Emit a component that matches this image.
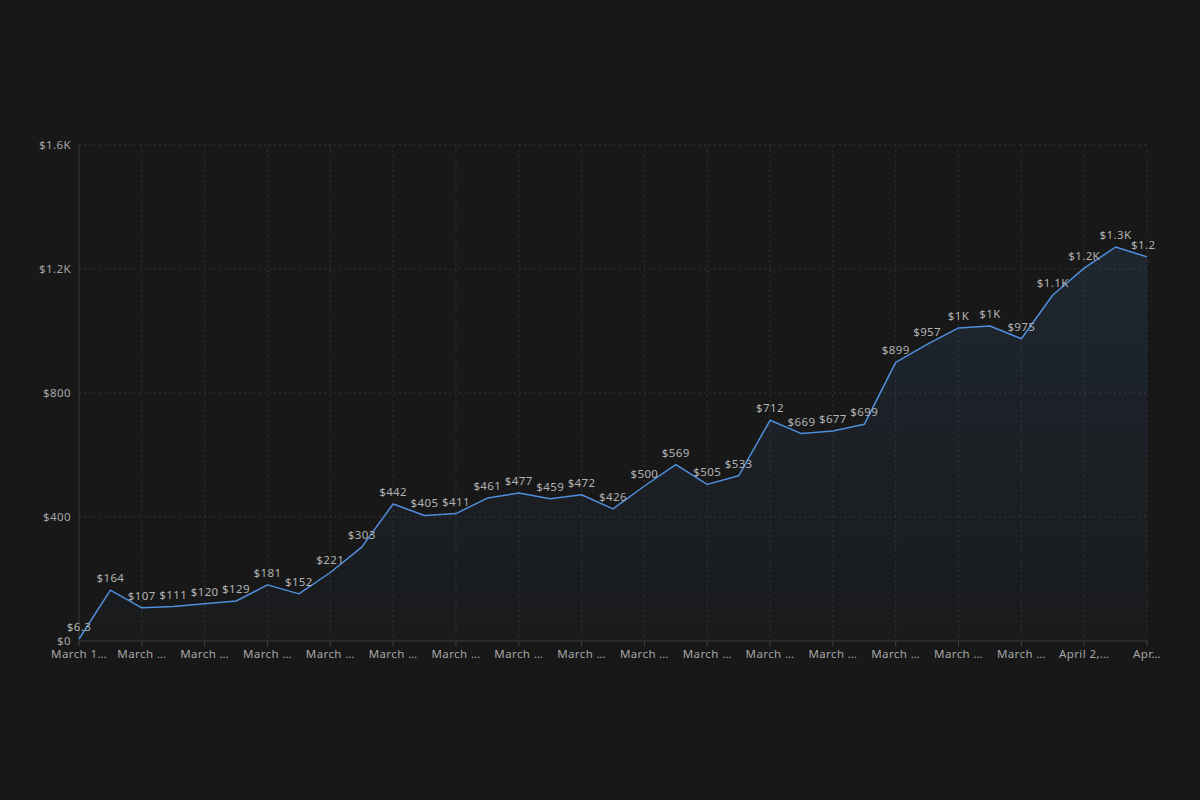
const vals = [6.3,164,107,111,120,129,181,152,221,303,442,405,411,461,477,459,472,426,500,569,505,533,712,669,677,699,899,957,1010,1016,975,1116,1203,1271,1239]
const labels = ['$6.3','$164','$107','$111','$120','$129','$181','$152','$221','$303','$442','$405','$411','$461','$477','$459','$472','$426','$500','$569','$505','$533','$712','$669','$677','$699','$899','$957','$1K','$1K','$975','$1.1K','$1.2K','$1.3K','$1.2K']
const xTicks = ['March 1…','March …','March …','March …','March …','March …','March …','March …','March …','March …','March …','March …','March …','March …','March …','March …','April 2,…','Apr…']

const X0 = 79, X1 = 1147, Y0 = 641, YT = 145
const px = (i) => X0 + (i * (X1 - X0)) / (vals.length - 1)
const py = (v) => Y0 - (v * (Y0 - YT)) / 1600

export default function App() {
  const pts = vals.map((v, i) => `${px(i).toFixed(1)},${py(v).toFixed(1)}`)
  const line = 'M' + pts.join(' L')
  const area = line + ` L${X1},${Y0} L${X0},${Y0} Z`
  return (
    <div className="w-[1200px] h-[800px] bg-[#181818] pt-[130px] pl-[30px] font-['Inter','Liberation_Sans',sans-serif] tracking-[0.4px]">
      <svg width="1140" height="550" viewBox="30 130 1140 550">
        <defs>
          <linearGradient id="fill" x1="0" y1="0" x2="0" y2="1">
            <stop offset="0%" stopColor="#4a8fe0" stopOpacity="0.12" />
            <stop offset="100%" stopColor="#4a8fe0" stopOpacity="0.02" />
          </linearGradient>
          <clipPath id="plot"><rect x="0" y="0" width="1155" height="800" /></clipPath>
        </defs>
        {[0, 400, 800, 1200, 1600].map((v) => (
          <g key={v}>
            {v > 0 && <line x1={X0} x2={X1} y1={py(v)} y2={py(v)} stroke="#333" strokeDasharray="2 3" />}
            <text x="71" y={py(v) + 4} textAnchor="end" fontSize="11.5" fill="#a6a6a6">{v === 0 ? '$0' : v >= 1000 ? `$${v / 1000}K` : `$${v}`}</text>
          </g>
        ))}
        {xTicks.map((t, k) => (
          <g key={k}>
            {k > 0 && <line x1={px(k * 2)} x2={px(k * 2)} y1={YT} y2={Y0} stroke="#333" strokeDasharray="2 3" />}
            <line x1={px(k * 2)} x2={px(k * 2)} y1={Y0} y2={Y0 + 5} stroke="#444" />
            <text x={px(k * 2)} y="658" textAnchor="middle" fontSize="11.5" fill="#a6a6a6">{t}</text>
          </g>
        ))}
        <line x1={X0} x2={X0} y1={YT} y2={Y0} stroke="#3a3a3a" />
        <line x1={X0} x2={X1} y1={Y0} y2={Y0} stroke="#3a3a3a" />
        <path d={area} fill="url(#fill)" />
        <path d={line} fill="none" stroke="#4f8fdc" strokeWidth="1.5" strokeLinejoin="round" />
        <g clipPath="url(#plot)">
          {vals.map((v, i) => (
            <text key={i} x={px(i)} y={py(v) - 8} textAnchor="middle" fontSize="11.5" fill="#b3b3b3">{labels[i]}</text>
          ))}
        </g>
      </svg>
    </div>
  )
}
